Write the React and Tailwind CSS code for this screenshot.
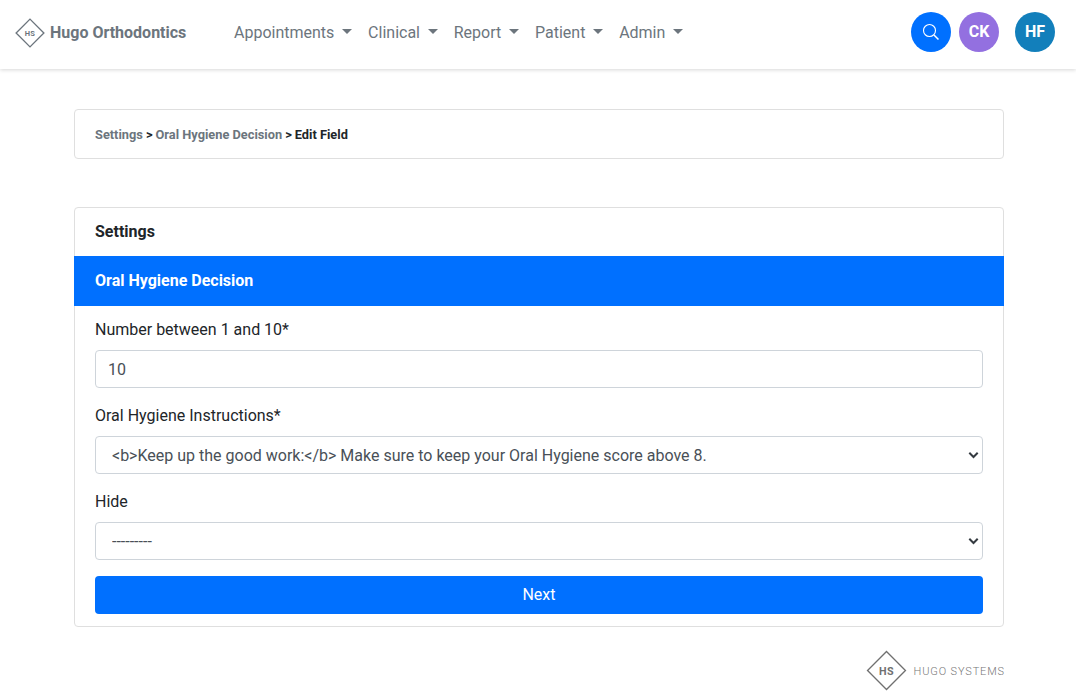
import React from "react";

const Logo = ({ size, color, stroke, fs, spacing }) => (
  <svg width={size} height={size} viewBox="0 0 40 40" className="shrink-0">
    <polygon points="20,1.5 38.5,20 20,38.5 1.5,20" fill="none" stroke={color} strokeWidth={stroke} />
    <text x="20" y="24" textAnchor="middle" fontFamily="Roboto, sans-serif" fontWeight="700" fontSize={fs} letterSpacing={spacing} fill={color}>HS</text>
  </svg>
);

const NavItem = ({ label }) => (
  <a className="flex items-center text-[16px] text-[#6c757d] px-2 h-6 leading-6">
    {label}
    <span className="ml-[7.75px] w-0 h-0 border-x-[5px] border-x-transparent border-t-[5px] border-t-[#6c757d] mb-[3px]" />
  </a>
);

const Avatar = ({ children, className }) => (
  <div className={"w-10 h-10 rounded-full flex items-center justify-center text-white font-bold text-[16px] " + className}>{children}</div>
);

const Chevron = () => (
  <svg width="11" height="8" viewBox="0 0 11 8" className="absolute right-[4px] top-[15px] pointer-events-none">
    <path d="M1.3 1.8 L5.5 6 L9.7 1.8" fill="none" stroke="#343a40" strokeWidth="2" />
  </svg>
);

const Select = ({ value }) => (
  <div className="relative h-[38px]">
    <select
      defaultValue={value}
      className="appearance-none w-full h-[38px] border border-[#ced4da] rounded bg-white pl-4 pr-6 pt-[1px] text-[#495057] text-[16px] outline-none"
    >
      <option value={value}>{value}</option>
    </select>
    <Chevron />
  </div>
);

export default function App() {
  return (
    <div className="min-h-[696px] bg-white text-[#212529] font-['Roboto',sans-serif] overflow-hidden">
      <nav className="h-[69px] bg-white shadow-[0_1px_4px_rgba(0,0,0,0.16)] flex items-center pl-[15px] pr-[21px]">
        <div className="flex items-center w-[211px] -mt-[3px]">
          <Logo size={30} color="#6c757d" stroke="1.8" fs="10" spacing="0.5" />
          <span className="ml-[5px] text-[16px] font-bold text-[#6c757d]">Hugo Orthodontics</span>
        </div>
        <div className="flex items-center -mt-[3px]">
          <NavItem label="Appointments" />
          <NavItem label="Clinical" />
          <NavItem label="Report" />
          <NavItem label="Patient" />
          <NavItem label="Admin" />
        </div>
        <div className="ml-auto flex items-center -mt-[5px]">
          <Avatar className="bg-[#0070ff]">
            <svg width="18" height="18" viewBox="0 0 18 18" fill="none" stroke="#fff" strokeWidth="1.1">
              <circle cx="7.5" cy="7.5" r="6" />
              <path d="M12 12 L16.5 16.5" strokeWidth="1.5" />
            </svg>
          </Avatar>
          <Avatar className="bg-[#9370e0] ml-2">CK</Avatar>
          <Avatar className="bg-[#127fbb] ml-4">HF</Avatar>
        </div>
      </nav>

      <main className="w-[930px] ml-[74px] mt-10">
        <div className="h-[50px] border border-[#dfdfdf] rounded px-5 pt-[1px] flex items-center text-[12.8px] font-bold">
          <span className="text-[#6c757d]">Settings</span>
          <span className="mx-[3px]">&gt;</span>
          <span className="text-[#6c757d]">Oral Hygiene Decision</span>
          <span className="mx-[3px]">&gt;</span>
          <span>Edit Field</span>
        </div>

        <section className="mt-12 h-[420px] border border-[#dfdfdf] rounded">
          <div className="h-[48px] flex items-center px-5 font-bold text-[16px]">Settings</div>
          <div className="h-[50px] -mx-[1px] bg-[#0070ff] text-white font-bold text-[16px] flex items-center pl-[21px]">Oral Hygiene Decision</div>
          <div className="px-5 pt-[12px]">
            <label className="block text-[16px] leading-6 mb-2">Number between 1 and 10*</label>
            <input
              defaultValue="10"
              className="block w-full h-[38px] border border-[#ced4da] rounded px-3 text-[#495057] text-[16px] outline-none"
            />
            <label className="block text-[16px] leading-6 mt-4 mb-2">Oral Hygiene Instructions*</label>
            <Select value="<b>Keep up the good work:</b> Make sure to keep your Oral Hygiene score above 8." />
            <label className="block text-[16px] leading-6 mt-4 mb-2">Hide</label>
            <Select value="---------" />
            <button className="block w-full h-[38px] mt-4 bg-[#0070ff] text-white text-[16px] rounded">Next</button>
          </div>
        </section>

        <div className="flex justify-end items-center mt-[23px] -mr-[1px]">
          <Logo size={41} color="#707070" stroke="1.3" fs="10.5" spacing="0.4" />
          <span className="ml-[6px] mt-[3px] text-[11px] font-light tracking-[0.87px] text-[#777] font-['Roboto',sans-serif]">HUGO SYSTEMS</span>
        </div>
      </main>
    </div>
  );
}
